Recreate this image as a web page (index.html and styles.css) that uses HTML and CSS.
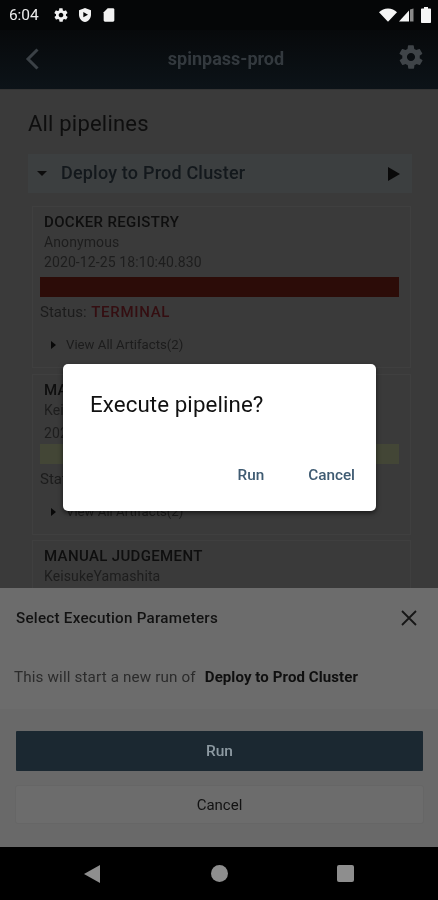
FILE: index.html
```html
<!DOCTYPE html>
<html lang="en">
<head>
<meta charset="utf-8">
<title>spinpass-prod</title>
<link rel="stylesheet" href="styles.css">
</head>
<body>
<div class="phone">
  <div class="status">
    <span class="time">6:04</span>
    <svg class="st-ic" viewBox="0 0 24 24" width="16" height="16"><path fill="#f2f2f2" d="M19.4 13c.1-.3.1-.7.1-1s0-.7-.1-1l2.1-1.6c.2-.2.2-.4.1-.6l-2-3.5c-.1-.2-.4-.3-.6-.2l-2.5 1c-.5-.4-1.1-.7-1.7-1l-.4-2.6c0-.3-.2-.5-.5-.5h-4c-.3 0-.5.2-.5.4l-.4 2.7c-.6.2-1.2.6-1.7 1l-2.5-1c-.2-.1-.5 0-.6.2l-2 3.500c-.1.2-.1.5.1.6L4.600 11c0 .3-.1.7-.1 1s0 .7.1 1l-2.100 1.600c-.2.2-.2.4-.1.6l2 3.500c.1.2.4.3.6.2l2.500-1c.5.4 1.100.7 1.700 1l.4 2.600c0 .3.2.5.5.5h4c.3 0 .5-.2.5-.4l.4-2.700c.6-.2 1.200-.6 1.700-1l2.500 1c.2.1.5 0 .6-.2l2-3.500c.1-.2.1-.5-.1-.6L19.400 13zM12 15.500c-1.900 0-3.500-1.600-3.500-3.500s1.600-3.500 3.500-3.500 3.500 1.600 3.500 3.500-1.600 3.500-3.500 3.500z"/></svg>
    <svg class="st-ic" viewBox="0 0 24 24" width="16" height="16"><path fill="#f2f2f2" fill-rule="evenodd" d="M12 1.500 3 5v6.500c0 5.400 3.800 10 9 11 5.200-1 9-5.600 9-11V5L12 1.500zM9.500 7.500v8l7-4-7-4z"/></svg>
    <svg class="st-ic" viewBox="0 0 24 24" width="16" height="16"><path fill="#f2f2f2" d="M10 2h8c1.100 0 2 .9 2 2v16c0 1.100-.9 2-2 2H6c-1.100 0-2-.9-2-2V8l6-6z"/></svg>
    <span class="spacer"></span>
    <svg class="st-wifi" viewBox="0 0 18 14" width="18" height="14"><path fill="#f5f5f5" d="M0 4.300C2.300 2 5.500.6 9 .6s6.700 1.400 9 3.700l-9 9.400-9-9.400z"/></svg>
    <svg class="st-cell" viewBox="0 0 15 14" width="15" height="14"><path fill="#f5f5f5" d="M0 13.500 10 2.500v11H0z"/><path fill="#8a8a8a" d="M11 1.500 14.500.5v13H11z"/></svg>
    <svg class="st-batt" viewBox="0 0 10 16" width="10" height="16"><path fill="#f5f5f5" d="M3 1.500V0h4v1.500h2c.6 0 1 .4 1 1V15c0 .6-.4 1-1 1H1c-.6 0-1-.4-1-1V2.500c0-.6.4-1 1-1h2z"/></svg>
  </div>
  <header class="appbar">
    <svg class="back" viewBox="0 0 16 22" width="16" height="22"><path fill="none" stroke="#3b4146" stroke-width="3" d="M13.500 1.500 4 11l9.500 9.500"/></svg>
    <span class="apptitle">spinpass-prod</span>
    <svg class="gear" viewBox="0 0 24 24" width="28" height="28"><path fill="#3f4448" d="M19.400 13c.1-.3.1-.7.1-1s0-.7-.1-1l2.100-1.600c.2-.2.2-.4.1-.6l-2-3.500c-.1-.2-.4-.3-.6-.2l-2.500 1c-.5-.4-1.100-.7-1.700-1l-.4-2.600c0-.3-.2-.5-.5-.5h-4c-.3 0-.5.2-.5.4l-.4 2.700c-.6.2-1.200.6-1.700 1l-2.500-1c-.2-.1-.5 0-.6.2l-2 3.500c-.1.2-.1.5.1.6L4.600 11c0 .3-.1.7-.1 1s0 .7.1 1l-2.100 1.600c-.2.2-.2.4-.1.6l2 3.500c.1.2.4.3.6.2l2.500-1c.5.4 1.100.7 1.700 1l.4 2.600c0 .3.2.5.5.5h4c.3 0 .5-.2.5-.4l.4-2.700c.6-.2 1.200-.6 1.700-1l2.500 1c.2.1.5 0 .6-.2l2-3.500c.1-.2.1-.5-.1-.6L19.400 13zM12 15.500c-1.900 0-3.500-1.600-3.500-3.500s1.600-3.500 3.500-3.500 3.500 1.600 3.500 3.500-1.600 3.500-3.500 3.500z"/></svg>
  </header>
  <main class="content">
    <h1 class="heading">All pipelines</h1>
    <div class="accordion">
      <span class="caret-down"></span>
      <span class="acc-title">Deploy to Prod Cluster</span>
      <span class="play"></span>
    </div>
    <section class="card">
      <h2 class="card-title">DOCKER REGISTRY</h2>
      <p class="card-line">Anonymous</p>
      <p class="card-line">2020-12-25 18:10:40.830</p>
      <div class="bar bar-red"></div>
      <p class="card-status">Status: <b class="terminal">TERMINAL</b></p>
      <p class="artifacts"><span class="caret-right"></span>View All Artifacts(2)</p>
    </section>
    <section class="card card-second">
      <h2 class="card-title">MANUAL JUDGEMENT</h2>
      <p class="card-line">KeisukeYamashita</p>
      <p class="card-line card-line-wide">2020-12-25 18:09:12.114</p>
      <div class="bar bar-green"></div>
      <p class="card-status">Status: <b class="succeeded">SUCCEEDED</b></p>
      <p class="artifacts"><span class="caret-right"></span>View All Artifacts(2)</p>
    </section>
    <section class="card card-third">
      <h2 class="card-title">MANUAL JUDGEMENT</h2>
      <p class="card-line">KeisukeYamashita</p>
    </section>

    <div class="sheet">
      <div class="sheet-head">
        <span class="sheet-title">Select Execution Parameters</span>
        <svg class="close" viewBox="0 0 16 16" width="16" height="16"><path stroke="#161616" stroke-width="1.800" fill="none" d="M1 1l14 14M15 1 1 15"/></svg>
      </div>
      <p class="sheet-text"><span>This will start a new run of</span><b>Deploy to Prod Cluster</b></p>
      <div class="sheet-actions">
        <div class="btn btn-run">Run</div>
        <div class="btn btn-cancel">Cancel</div>
      </div>
    </div>

    <div class="dialog">
      <div class="dialog-title">Execute pipeline?</div>
      <div class="dialog-actions"><span>Run</span><span>Cancel</span></div>
    </div>
  </main>
  <nav class="navbar">
    <svg viewBox="0 0 18 20" width="18" height="20"><path fill="#8e8e8e" d="M17 1v18L1 10z"/></svg>
    <span class="nav-home"></span>
    <span class="nav-recent"></span>
  </nav>
</div>
</body>
</html>
```
FILE: styles.css
```css
* { box-sizing: border-box; }
html, body { margin: 0; padding: 0; }
body { width: 438px; height: 900px; overflow: hidden; background: #000; font-family: Roboto, "Noto Sans", sans-serif; }
.phone { width: 438px; height: 900px; display: flex; flex-direction: column; filter: blur(.35px); }

.status { height: 30px; flex: none; background: #050607; display: flex; align-items: center; padding: 0 7px 0 9px; color: #ececec; }
.time { font-size: 15.500px; width: 44px; letter-spacing: -.1px; }
.st-ic { margin-right: 8px; }
.spacer { flex: 1; }
.st-wifi { margin-right: 2px; }
.st-cell { margin-right: 7px; }

.appbar { height: 59px; flex: none; background: linear-gradient(#07090b, #0c1318); display: flex; align-items: center; justify-content: space-between; padding: 0 13px 0 24px; position: relative; }
.back { margin-top: -2px; }
.apptitle { position: absolute; left: 14px; right: 0; text-align: center; font-size: 18px; font-weight: 700; color: #33393e; margin-top: -3px; }
.gear { margin-top: -5px; }

.content { flex: 1; background: #3a3a3a; position: relative; overflow: hidden; padding: 1px 0 0; border-top: 1px solid #343434; }
.heading { margin: 19px 0 0 28px; font-size: 22px; line-height: 28px; font-weight: 400; color: #0e0e0e; letter-spacing: .2px; }
.accordion { margin: 16px 26px 0 28px; height: 39px; background: #3c3f40; display: flex; align-items: center; padding: 0 12px 0 9px; }
.caret-down { width: 0; height: 0; border-left: 5px solid transparent; border-right: 5px solid transparent; border-top: 5px solid #0c0c0c; margin-right: 14px; }
.acc-title { flex: 1; font-size: 18px; font-weight: 500; color: #13181c; letter-spacing: .2px; margin-top: -2px; }
.play { width: 0; height: 0; border-top: 7px solid transparent; border-bottom: 7px solid transparent; border-left: 12px solid #090909; }

.card { margin: 13px 27px 0 32px; padding: 5px 11px 0 8px; height: 162px; border: 1px solid #3f3f3f; }
.card-second { margin-top: 6px; height: 161px; }
.card-third { margin-top: 5px; }
.card-title { margin: 0 0 1px 3px; font-size: 15px; line-height: 20px; font-weight: 500; color: #0e0e0e; letter-spacing: .35px; }
.card-line { margin: 0 0 0 3px; font-size: 14px; line-height: 19.500px; color: #1d1d1d; letter-spacing: .1px; }
.card-line-wide { margin-top: 3px; }
.bar { height: 20px; margin-top: 5px; margin-left: -1px; }
.bar-red { background: #2c0c08; }
.bar-green { background: #434636; margin-top: 1px; }
.card-status { margin: 5px 0 0 -1px; font-size: 15px; line-height: 20px; color: #1c1c1c; }
.terminal { color: #340e11; font-weight: 500; letter-spacing: .7px; margin-left: 1px; }
.succeeded { color: #2c3d1c; font-weight: 500; }
.artifacts { margin: 13px 0 0 10px; font-size: 13.200px; line-height: 20px; color: #1c1c1c; display: flex; align-items: center; }
.caret-right { width: 0; height: 0; border-top: 4.500px solid transparent; border-bottom: 4.500px solid transparent; border-left: 5px solid #080808; margin-right: 10px; }

.sheet { position: absolute; left: 0; right: 0; bottom: 0; height: 259px; background: #6c6c6c; display: flex; flex-direction: column; }
.sheet-head { display: flex; align-items: center; justify-content: space-between; padding: 12px 21px 0 16px; height: 47px; }
.sheet-title { font-size: 15.200px; font-weight: 500; color: #121212; letter-spacing: .25px; }
.sheet-text { margin: 0; padding: 10px 0 0 14px; height: 74px; display: flex; align-items: center; gap: 9px; font-size: 15.200px; color: #2b2b2b; letter-spacing: .15px; }
.sheet-text b { font-weight: 700; font-size: 15px; color: #0f0f0f; letter-spacing: .1px; }
.sheet-actions { flex: 1; background: #696969; padding: 22px 15px 0 16px; display: flex; flex-direction: column; gap: 14px; }
.btn { display: flex; align-items: center; justify-content: center; font-size: 15px; }
.btn-run { height: 40px; background: #1b2831; color: #8d9aa2; border-radius: 1px; font-weight: 500; font-size: 15.500px; }
.btn-cancel { height: 39px; margin: 0 -1px; border: 1px solid #666; border-radius: 3px; background: #6c6c6c; color: #121212; }

.dialog { position: absolute; left: 63px; top: 274px; width: 313px; height: 147px; background: #fff; border-radius: 5px; box-shadow: 0 2px 5px rgba(0,0,0,.6); padding: 0 21px 0 27px; }
.dialog-title { font-size: 22.300px; line-height: 28px; margin-top: 26px; color: #111; letter-spacing: .1px; }
.dialog-actions { display: flex; justify-content: flex-end; gap: 44px; margin-top: 47px; font-size: 15.300px; line-height: 20px; color: #3f5b72; font-weight: 500; }

.navbar { height: 53px; flex: none; background: #000; display: flex; align-items: center; padding: 0 84px 0 83px; justify-content: space-between; }
.nav-home { width: 17px; height: 17px; border-radius: 50%; background: #8e8e8e; }
.nav-recent { width: 17px; height: 17px; background: #8e8e8e; border-radius: 2px; }
```
